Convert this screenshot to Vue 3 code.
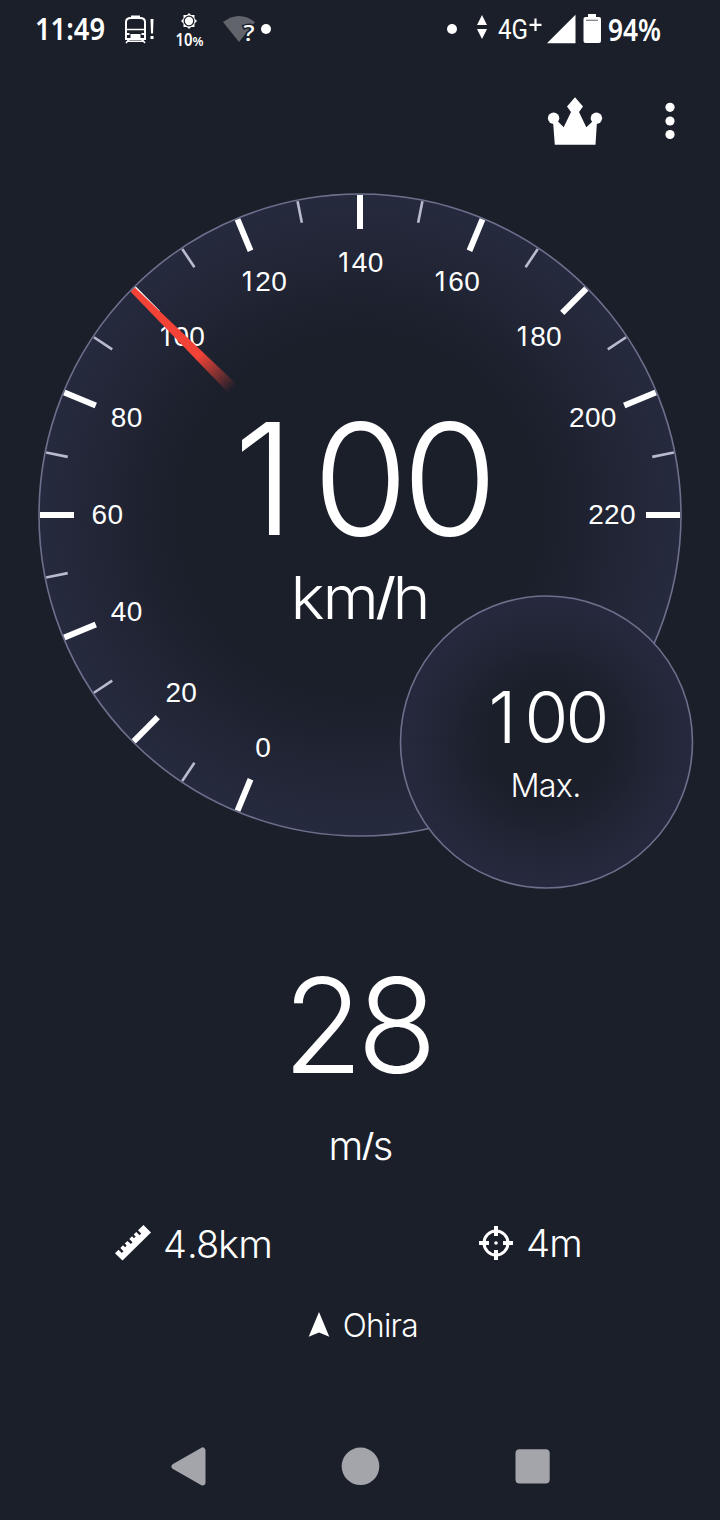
<script setup>
const CENTER_X = 360
const CENTER_Y = 335
const STEP = 11.25
const DIGIT = 15.9

const point = (radius, degrees) => {
  const a = (degrees * Math.PI) / 180
  return { x: CENTER_X - radius * Math.cos(a), y: CENTER_Y - radius * Math.sin(a) }
}

// Tabular digits, centred on the label position.
const spread = (count, x) =>
  Array.from({ length: count }, (_, i) => x + (i - (count - 1) / 2) * DIGIT)

// Speed 60 sits at the left of the dial; every 10 km/h is one step clockwise.
const ticks = Array.from({ length: 23 }, (_, i) => {
  const speed = i * 10
  const angle = (i - 6) * STEP
  const major = i % 2 === 0
  const outer = point(320, angle)
  const inner = point(major ? 286 : 298, angle)
  const label = point(252.3, angle)
  return { speed, major, outer, inner, y: label.y + 9, xs: spread(String(speed).length, label.x - 0.4) }
})
const labels = ticks.filter((t) => t.major)
</script>

<template>
  <main class="screen">
    <header class="status">
      <svg class="status-left" width="290" height="60" viewBox="0 0 290 60">
        <text class="sys" x="35" y="40" font-size="31" textLength="70" lengthAdjust="spacingAndGlyphs">11:49</text>
        <g fill="none" stroke="#fff" stroke-width="2">
          <path d="M126 39V22Q126 18 131 18H140Q145 18 145 22V39Z" />
          <path d="M126 29.5H145" stroke-width="1.5" />
          <path d="M126 43L129 39.5M145 43L142 39.5M127 41.3H144" stroke-width="1.6" />
        </g>
        <path d="M131 17V15.5H140V17ZM130.500 34H140.500V39H130.500ZM127 33H129.500V35H127ZM141.500 33H144V35H141.500Z" fill="#fff" />
        <path d="M150.500 19H153.500L153 33.500H151ZM150.500 36H153.500V39H150.500Z" fill="#fff" />
        <g transform="translate(189 21)">
          <path fill="#fff" d="M0-8L2-6H5.500V-2.500L8 0L5.500 2.500V6H2L0 8L-2 6H-5.500V2.500L-8 0L-5.500-2.500V-6H-2Z" />
          <circle r="4.800" fill="#fff" stroke="#1b1f2a" stroke-width="1.300" />
        </g>
        <text class="sys bold" x="175.500" y="45.500" font-size="17" textLength="17" lengthAdjust="spacingAndGlyphs">10</text>
        <text class="sys" x="192.500" y="45.500" font-size="13" textLength="11" lengthAdjust="spacingAndGlyphs">%</text>
        <path d="M239 42L223 22Q239 10 255 22Z" fill="#62646c" />
        <text class="sys halo" x="243.500" y="41" font-size="21" textLength="11" lengthAdjust="spacingAndGlyphs">?</text>
        <circle cx="266" cy="29" r="5" fill="#fff" />
      </svg>
      <svg class="status-right" width="250" height="60" viewBox="430 0 250 60">
        <circle cx="452" cy="29" r="5" fill="#fff" />
        <path d="M482 15L487 25H477ZM482 39L477 29H487Z" fill="#fff" />
        <text class="net" x="498" y="39" font-size="27" textLength="30" lengthAdjust="spacingAndGlyphs">4G</text>
        <path d="M529.500 24.800H541.500M535.500 18.500V31" stroke="#fff" stroke-width="2.200" />
        <path d="M547 43.300L575.500 14.800V43.300Z" fill="#fff" />
        <path d="M588 17V14H596V17H599Q601 17 601 19V41Q601 43 599 43H585.500Q583.500 43 583.500 41V19Q583.500 17 585.500 17Z" fill="#fff" />
        <path d="M586 20.300H598" stroke="#777a82" stroke-width="1.200" />
        <text class="sys" x="608" y="40.500" font-size="31" textLength="53" lengthAdjust="spacingAndGlyphs">94%</text>
      </svg>
    </header>

    <nav class="toolbar">
      <svg width="56" height="50" viewBox="547 96 56 50" fill="#fff">
        <circle cx="553.600" cy="118.200" r="5.700" />
        <circle cx="596.400" cy="118.200" r="5.700" />
        <path d="M575 97.300L583 106.500L579 112L586.300 127.300L594 120L597 121L595.500 144.700H554.800L553 121L556.500 120L563.700 127.300L571 112L567 106.500Z" />
      </svg>
      <svg width="10" height="38" viewBox="665 102 10 38" fill="#fff">
        <circle cx="670" cy="107.300" r="4.600" />
        <circle cx="670" cy="121" r="4.600" />
        <circle cx="670" cy="134.500" r="4.600" />
      </svg>
    </nav>

    <svg class="dial" width="720" height="720" viewBox="0 0 720 720">
      <defs>
        <radialGradient id="face">
          <stop offset="0.56" stop-color="#1b1f2a" />
          <stop offset="1" stop-color="#262a3e" />
        </radialGradient>
        <radialGradient id="faceSmall">
          <stop offset="0.4" stop-color="#1b1f2a" />
          <stop offset="0.95" stop-color="#26293d" />
        </radialGradient>
        <linearGradient id="fade" x1="40" y1="0" x2="181" y2="0" gradientUnits="userSpaceOnUse">
          <stop offset="0.66" stop-color="#f44336" />
          <stop offset="1" stop-color="#f44336" stop-opacity="0" />
        </linearGradient>
      </defs>
      <circle class="rim" cx="360" cy="335" r="321" fill="url(#face)" />
      <line
        v-for="t in ticks"
        :key="t.speed"
        :class="t.major ? 'major' : 'minor'"
        :x1="t.outer.x"
        :y1="t.outer.y"
        :x2="t.inner.x"
        :y2="t.inner.y"
      />
      <text v-for="t in labels" :key="'l' + t.speed" class="label" :y="t.y"><tspan
        v-for="(d, i) in String(t.speed)"
        :key="i"
        :x="t.xs[i]"
        :class="{ one: d === '1' }"
      >{{ d }}</tspan></text>
      <path d="M40 332L181 329V341L40 338Z" fill="url(#fade)" transform="rotate(44.75 360 335)" />
      <text class="light glyphs" font-size="155" x="264 360.500 449.800" y="355">100</text>
      <text class="light unit" font-size="59.500" x="290.500" y="439" textLength="138" lengthAdjust="spacingAndGlyphs">km<tspan class="slash">/</tspan>h</text>
      <circle class="rim" cx="546.500" cy="562" r="146" fill="url(#faceSmall)" />
      <text class="light glyphs" font-size="71" x="502.500 546.500 587.500" y="562.500">100</text>
      <text class="light small" font-size="33" x="510.500" y="617" textLength="70" lengthAdjust="spacingAndGlyphs">Max.</text>
    </svg>

    <section class="metric">
      <svg width="180" height="280" viewBox="270 900 180 280">
        <text class="light glyphs" font-size="131" x="323 397" y="1073">28</text>
        <text class="light small" font-size="39" x="328.500" y="1160" textLength="64" lengthAdjust="spacingAndGlyphs">m<tspan class="slash">/</tspan>s</text>
      </svg>
    </section>

    <section class="stats">
      <div class="stat">
        <svg width="40" height="40" viewBox="113 1223 40 40" fill="#fff">
          <path d="M143.500 1225L151 1232.500L122.500 1260.500L115 1253.300L118.500 1249.800L121.800 1253L123.500 1251.300L120.300 1248L123 1245.300L125 1247.300L126.700 1245.600L124.700 1243.600L127.500 1240.900L130.800 1244L132.500 1242.300L129.300 1239L132 1236.300L134 1238.300L135.700 1236.600L133.700 1234.600L136.300 1232L139.500 1235.200L141.200 1233.500L138 1230.300Z" />
        </svg>
        <svg width="120" height="60" viewBox="160 1213 120 60">
          <text class="light" font-size="38" y="1258"><tspan x="163">4</tspan><tspan x="187">.</tspan><tspan x="196">8</tspan><tspan class="small" x="218" textLength="54" lengthAdjust="spacingAndGlyphs">km</tspan></text>
        </svg>
      </div>
      <div class="stat">
        <svg width="40" height="40" viewBox="476 1223 40 40" fill="none" stroke="#fff">
          <circle cx="496" cy="1243" r="12" stroke-width="3" />
          <path d="M496 1226V1236M496 1250V1260M479 1243H489M503 1243H513" stroke-width="4" />
          <circle cx="496" cy="1243" r="1.800" fill="#fff" stroke="none" />
        </svg>
        <svg width="70" height="60" viewBox="523 1213 70 60">
          <text class="light small" font-size="38" x="526" y="1257" textLength="56" lengthAdjust="spacingAndGlyphs">4m</text>
        </svg>
      </div>
    </section>

    <section class="place">
      <svg width="22" height="30" viewBox="308 1309 22 30" fill="#fff">
        <path d="M319 1311L329.300 1335.800L319 1331.500L308.700 1335.800Z" />
      </svg>
      <svg width="90" height="40" viewBox="340 1305 90 40">
        <text class="light small" font-size="32.500" x="342.800" y="1336.500" textLength="75" lengthAdjust="spacingAndGlyphs">Ohira</text>
      </svg>
    </section>

    <footer class="navbar">
      <svg width="40" height="40" viewBox="170 1446 40 40">
        <path d="M174.500 1466.500L202.500 1450.500V1482.500Z" fill="#a4a5aa" stroke="#a4a5aa" stroke-width="6" stroke-linejoin="round" />
      </svg>
      <svg width="40" height="40" viewBox="340 1446 40 40"><circle cx="360.500" cy="1466.300" r="18.800" fill="#a4a5aa" /></svg>
      <svg width="40" height="40" viewBox="513 1446 40 40"><rect x="515.500" y="1449.300" width="34.200" height="34.200" rx="4" fill="#a4a5aa" /></svg>
    </footer>
  </main>
</template>

<style>
html,
body {
  background: #1b1f2a;
}
</style>

<style scoped>
.screen {
  width: 720px;
  height: 1520px;
  display: flex;
  flex-direction: column;
  overflow: hidden;
  background: #1b1f2a;
  color: #fff;
}
svg {
  display: block;
  flex: none;
}
text {
  fill: #fff;
}
.sys {
  font-family: "Noto Sans", sans-serif;
  font-weight: 560;
}
.bold {
  font-weight: 600;
}
.halo {
  font-weight: 500;
  stroke: #1b1f2a;
  stroke-width: 3px;
  paint-order: stroke;
}
.net {
  font-family: Roboto, sans-serif;
  font-weight: 400;
}
.light {
  font-family: Inter, "Liberation Sans", sans-serif;
  font-weight: 300;
}
.unit {
  letter-spacing: -2px;
}
.small {
  letter-spacing: -0.8px;
}
/* Helvetica-style slash that stays on the baseline. */
.slash {
  font-family: "Liberation Sans", Arial, sans-serif;
}
.glyphs,
.label {
  text-anchor: middle;
}
.label {
  font-family: "Liberation Sans", Arial, sans-serif;
  font-size: 28px;
}
.one {
  font-family: Inter, sans-serif;
  font-size: 26.5px;
}
.status {
  height: 60px;
  display: flex;
  justify-content: space-between;
  padding-right: 40px;
}
.toolbar {
  height: 120px;
  display: flex;
  justify-content: flex-end;
  align-items: center;
  gap: 62px;
  padding: 2px 45px 0 0;
  box-sizing: border-box;
}
.rim {
  stroke: #6d708c;
  stroke-width: 1.6;
}
.major {
  stroke: #fff;
  stroke-width: 6;
}
.minor {
  stroke: #b9bbd0;
  stroke-width: 2.6;
}
.metric {
  height: 280px;
  display: flex;
  justify-content: center;
}
.stats {
  height: 125px;
  display: flex;
  align-items: center;
  gap: 196px;
  padding-left: 113px;
}
.stat {
  display: flex;
  align-items: center;
  gap: 7px;
}
.place {
  height: 40px;
  display: flex;
  align-items: center;
  gap: 10px;
  padding-left: 308px;
}
.navbar {
  flex: 1;
  display: flex;
  align-items: flex-start;
  padding: 101px 0 0 170px;
  gap: 130px;
}
.navbar svg:last-child {
  margin-left: 3px;
}
</style>
